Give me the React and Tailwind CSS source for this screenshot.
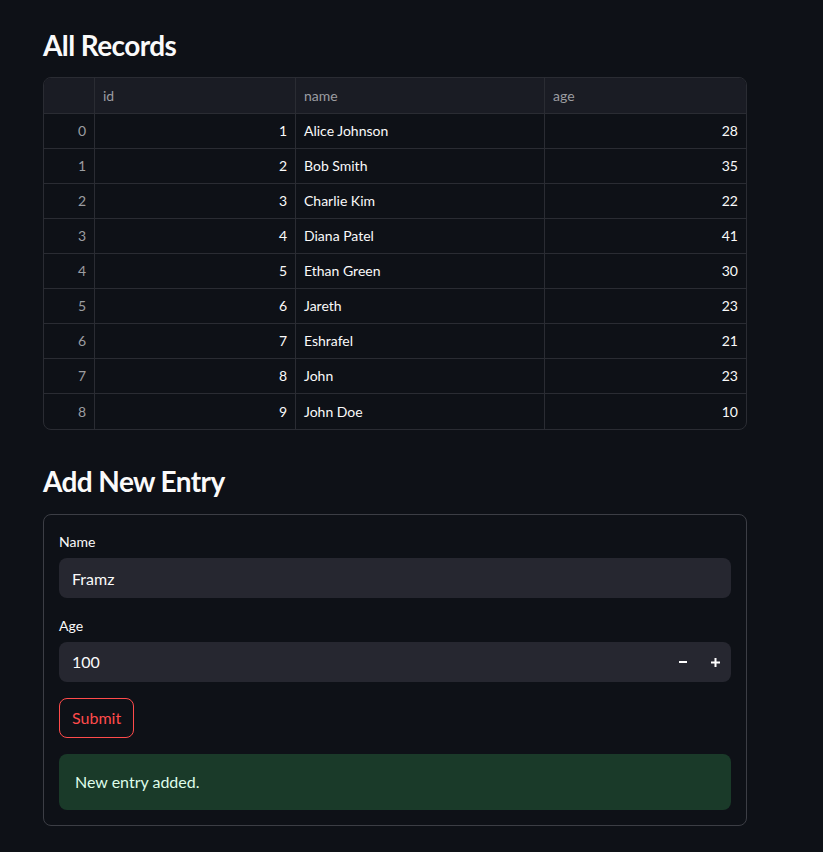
import { useState } from 'react'

// ─── Datos de la tabla ───
const RECORDS = [
  { id: 1, name: 'Alice Johnson', age: 28 },
  { id: 2, name: 'Bob Smith', age: 35 },
  { id: 3, name: 'Charlie Kim', age: 22 },
  { id: 4, name: 'Diana Patel', age: 41 },
  { id: 5, name: 'Ethan Green', age: 30 },
  { id: 6, name: 'Jareth', age: 23 },
  { id: 7, name: 'Eshrafel', age: 21 },
  { id: 8, name: 'John', age: 23 },
  { id: 9, name: 'John Doe', age: 10 }
]

const FONT = "font-['Lato','Noto_Sans',sans-serif]"

export default function App() {
  const [name, setName] = useState('Framz')
  const [age, setAge] = useState(100)

  return (
    <div className={`min-h-[852px] bg-[#0e1117] text-[#fafafa] ${FONT}`}>
      <div className="w-[704px] ml-[43px] pt-[26px] pb-[26px]">
        <h3 className="text-[28px] font-bold leading-[38px] tracking-[-0.6px]">All Records</h3>

        {/* Tabla */}
        <div className="mt-[13px] border border-[#2a2c33] rounded-lg overflow-hidden">
          <div className="grid grid-cols-[51px_201px_249px_1fr] h-[36px] bg-[#1a1c24] border-b border-[#2a2c33] text-sm text-[#9c9da1]">
            <div className="border-r border-[#2a2c33]" />
            <div className="border-r border-[#2a2c33] flex items-center px-2">id</div>
            <div className="border-r border-[#2a2c33] flex items-center px-2">name</div>
            <div className="flex items-center px-2">age</div>
          </div>
          {RECORDS.map((r, i) => (
            <div
              key={r.id}
              className={`grid grid-cols-[51px_201px_249px_1fr] h-[35px] text-sm ${i < RECORDS.length - 1 ? 'border-b border-[#2a2c33]' : ''}`}
            >
              <div className="border-r border-[#2a2c33] flex items-center justify-end px-2 text-[#9c9da1]">{i}</div>
              <div className="border-r border-[#2a2c33] flex items-center justify-end px-2">{r.id}</div>
              <div className="border-r border-[#2a2c33] flex items-center px-2">{r.name}</div>
              <div className="flex items-center justify-end px-2">{r.age}</div>
            </div>
          ))}
        </div>

        <h3 className="mt-[32px] text-[28px] font-bold leading-[38px] tracking-[-0.6px]">Add New Entry</h3>

        {/* Formulario */}
        <div className="mt-[14px] border border-[#3c3e45] rounded-lg p-[15px] pt-[17px]">
          <label className="block text-sm leading-[20px] mb-[6px]">Name</label>
          <input
            value={name}
            onChange={e => setName(e.target.value)}
            className="w-full h-10 bg-[#262730] rounded-lg px-[13px] text-base outline-none"
          />
          <label className="block text-sm leading-[20px] mt-[18px] mb-[6px]">Age</label>
          <div className="flex items-center h-10 bg-[#262730] rounded-lg pl-[13px]">
            <span className="flex-1 text-base">{age}</span>
            <button onClick={() => setAge(a => a - 1)} className="w-8 h-10 flex items-center justify-center">
              <span className="block w-[8px] h-[2px] bg-white" />
            </button>
            <button onClick={() => setAge(a => a + 1)} className="w-8 h-10 flex items-center justify-center">
              <svg width="9" height="9" viewBox="0 0 9 9"><path d="M4.5 0v9M0 4.5h9" stroke="white" strokeWidth="2" /></svg>
            </button>
          </div>
          <button className="mt-4 h-10 px-3 border border-[#ff4b4b] rounded-lg text-[#ff4b4b] text-base">Submit</button>
          <div className="mt-4 h-[56px] bg-[#1a3a29] rounded-lg px-4 flex items-center text-base text-[#dffde9]">
            New entry added.
          </div>
        </div>
      </div>
    </div>
  )
}
